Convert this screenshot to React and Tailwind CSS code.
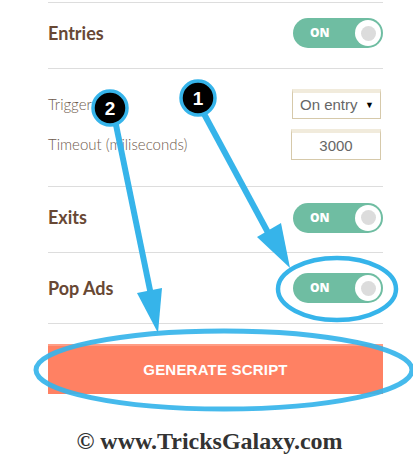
import React from "react";

function Toggle() {
  return (
    <div className="flex h-[30px] w-[90px] items-center justify-between rounded-full bg-[#6fbda2] pl-[17px] pr-[2px]">
      <span className="font-['Open_Sans',sans-serif] text-[12px] font-extrabold text-white">
        ON
      </span>
      <span className="flex h-[26px] w-[26px] items-center justify-center rounded-full bg-white">
        <span className="h-[15px] w-[15px] rounded-full bg-[#dcdcdc]" />
      </span>
    </div>
  );
}

function ToggleRow({ label, height }) {
  return (
    <div className={`flex items-center justify-between border-b border-[#dddddd] ${height}`}>
      <span className="font-['Lato',sans-serif] text-[18px] font-bold text-[#684834]">
        {label}
      </span>
      <Toggle />
    </div>
  );
}

function Annotations() {
  const blue = "#36b4ea";
  return (
    <svg
      className="pointer-events-none absolute left-0 top-0"
      width="413"
      height="464"
      viewBox="0 0 413 464"
    >
      {/* arrow 1 */}
      <line x1="203" y1="112" x2="272" y2="240" stroke={blue} strokeWidth="6" />
      <polygon points="290,268 257,237 281,223" fill={blue} />
      {/* arrow 2 */}
      <line x1="115" y1="120" x2="151" y2="295" stroke={blue} strokeWidth="6" />
      <polygon points="158,333 137,293 162,288" fill={blue} />
      {/* ellipses */}
      <ellipse cx="337" cy="289" rx="59" ry="31" fill="none" stroke={blue} strokeWidth="4.5" />
      <ellipse cx="224" cy="370" rx="188" ry="39" fill="none" stroke={blue} strokeWidth="5" opacity="0.92" />
      {/* badges */}
      <circle cx="198" cy="98" r="17" fill="#000" stroke={blue} strokeWidth="3.5" />
      <text x="198" y="105" textAnchor="middle" fill="#fff" fontFamily="'Liberation Sans', Arial, sans-serif" fontWeight="bold" fontSize="19">1</text>
      <circle cx="110" cy="108" r="17" fill="#000" stroke={blue} strokeWidth="3.5" />
      <text x="110" y="115" textAnchor="middle" fill="#fff" fontFamily="'Liberation Sans', Arial, sans-serif" fontWeight="bold" fontSize="19">2</text>
    </svg>
  );
}

export default function App() {
  return (
    <div className="relative h-[464px] w-[413px] overflow-hidden bg-white">
      <div className="ml-[48px] w-[335px] pt-[2px]">
        <div className="border-t border-[#dddddd]" />
        <ToggleRow label="Entries" height="h-[66px] pb-[5px]" />

        <div className="flex flex-col gap-[10px] border-b border-[#dddddd] pb-[26px] pt-[20px] font-['Lato',sans-serif] text-[15px] font-light text-[#6e5a4c]">
          <div className="flex items-center justify-between">
            <span>Trigger</span>
            <div className="mr-[2px] flex h-[30px] w-[89px] items-center justify-between border border-[#d6c9aa] border-t-[4px] border-t-[#f1ebdc] bg-white pl-[7px] pr-[6px] font-['Liberation_Sans',Arial,sans-serif] text-[15px] font-normal text-[#666666]">
              <span>On entry</span>
              <span className="text-[9px] text-black">▼</span>
            </div>
          </div>
          <div className="flex items-center justify-between">
            <span>Timeout (miliseconds)</span>
            <div className="mr-[2px] flex h-[31px] w-[90px] items-center justify-center border border-[#d6c9aa] border-t-[4px] border-t-[#f1ebdc] bg-white font-['Liberation_Sans',Arial,sans-serif] text-[15px] font-normal text-[#666666]">
              3000
            </div>
          </div>
        </div>

        <ToggleRow label="Exits" height="h-[66px] pb-[4px]" />
        <ToggleRow label="Pop Ads" height="h-[71px]" />

        <button className="mt-[20px] flex h-[50px] w-full items-center justify-center border-t-[2px] border-[#ff9d85] bg-[#ff8163] font-['Liberation_Sans',Arial,sans-serif] text-[15px] font-bold tracking-[0.2px] text-white">
          GENERATE SCRIPT
        </button>

        <p className="mt-[29px] -ml-[48px] w-[413px] pl-[6px] text-center font-['Liberation_Serif',serif] text-[24px] font-bold text-[#333333]">
          © www.TricksGalaxy.com
        </p>
      </div>
      <Annotations />
    </div>
  );
}
